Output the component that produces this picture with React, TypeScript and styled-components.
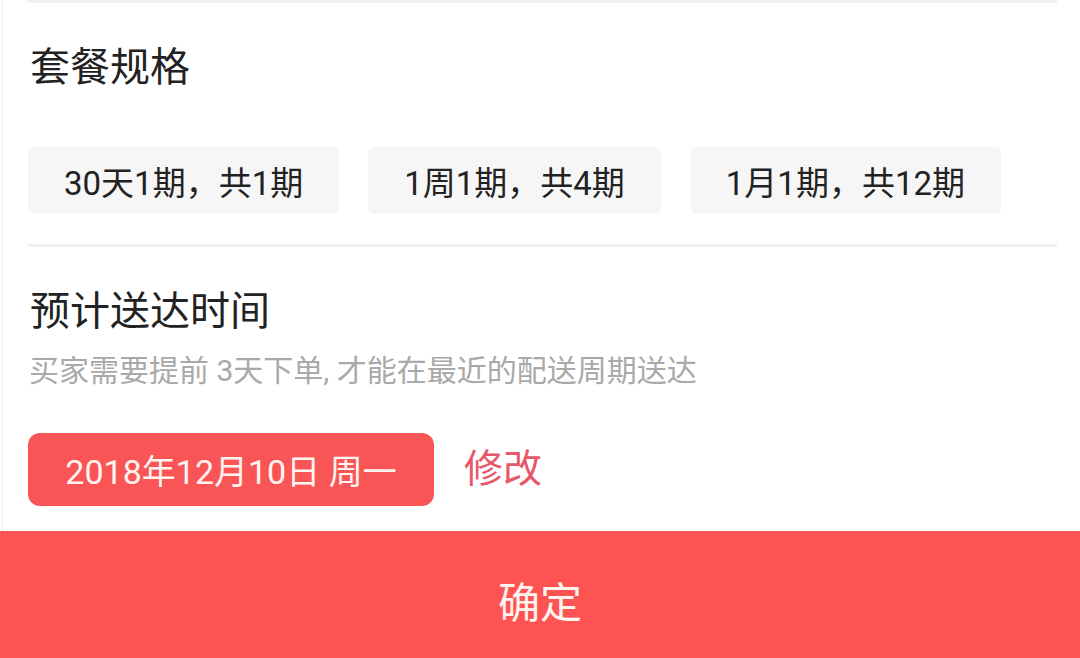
import styled, { createGlobalStyle } from 'styled-components';

const GlobalStyle = createGlobalStyle`
    html, body {
        margin: 0;
        padding: 0;
        background: #ffffff;
    }

    body {
        font-family: Roboto, 'Noto Sans CJK SC', sans-serif;
        color: #222222;
    }
`;

const StyledPage = styled.div`
    width: 1080px;
    height: 658px;
    display: flex;
    flex-direction: column;
    overflow: hidden;
    background: #ffffff;
`;

const StyledContent = styled.div`
    flex: 1;
    margin-left: 2px;
    border-left: 1px solid #ececec;
    padding: 0 23px 0 25px;
    display: flex;
    flex-direction: column;
`;

const StyledDivider = styled.div<{ $top?: number }>`
    height: 3px;
    background: #f1f1f1;
    margin-top: ${({ $top }) => $top ?? 0}px;
`;

const StyledTitle = styled.h3<{ $top: number }>`
    margin: ${({ $top }) => $top}px 0 0 2px;
    font-size: 40px;
    line-height: 40px;
    font-weight: 400;
    color: #222222;
`;

const StyledHint = styled.p`
    margin: 24px 0 0 1px;
    font-size: 30px;
    line-height: 30px;
    color: #a9a9a9;
`;

const StyledChips = styled.ul`
    list-style: none;
    margin: 59px 0 0;
    padding: 0;
    display: flex;
    gap: 29px;
`;

const StyledChip = styled.li`
    height: 67px;
    padding: 0 36px;
    border-radius: 6px;
    background: #f6f6f6;
    display: flex;
    align-items: center;
    font-size: 33px;
    color: #222222;
`;

const StyledDateRow = styled.div`
    margin-top: 47px;
    display: flex;
    align-items: center;
    gap: 30px;
`;

const StyledDate = styled.div`
    height: 73px;
    width: 406px;
    box-sizing: border-box;
    border-radius: 12px;
    background: #fa5556;
    color: #fff3f0;
    font-size: 34px;
    display: flex;
    align-items: center;
    justify-content: center;
`;

const StyledEdit = styled.span`
    font-size: 39px;
    color: #e8566a;
    margin-top: -10px;
`;

const StyledConfirm = styled.button`
    height: 127px;
    width: 100%;
    border: none;
    background: #fd5453;
    color: #fff4ee;
    font-family: inherit;
    font-size: 42px;
    display: flex;
    align-items: center;
    justify-content: center;
    padding: 10px 0 0;
`;

const plans = ['30天1期，共1期', '1周1期，共4期', '1月1期，共12期'];

function App() {
    return (
        <StyledPage>
            <GlobalStyle />
            <StyledContent>
                <StyledDivider />
                <StyledTitle $top={45}>套餐规格</StyledTitle>
                <StyledChips>
                    {plans.map((plan) => (
                        <StyledChip key={plan}>{plan}</StyledChip>
                    ))}
                </StyledChips>
                <StyledDivider $top={30} />
                <StyledTitle $top={45}>预计送达时间</StyledTitle>
                <StyledHint>买家需要提前 3天下单, 才能在最近的配送周期送达</StyledHint>
                <StyledDateRow>
                    <StyledDate>2018年12月10日 周一</StyledDate>
                    <StyledEdit>修改</StyledEdit>
                </StyledDateRow>
            </StyledContent>
            <StyledConfirm>确定</StyledConfirm>
        </StyledPage>
    );
}

export default App;
